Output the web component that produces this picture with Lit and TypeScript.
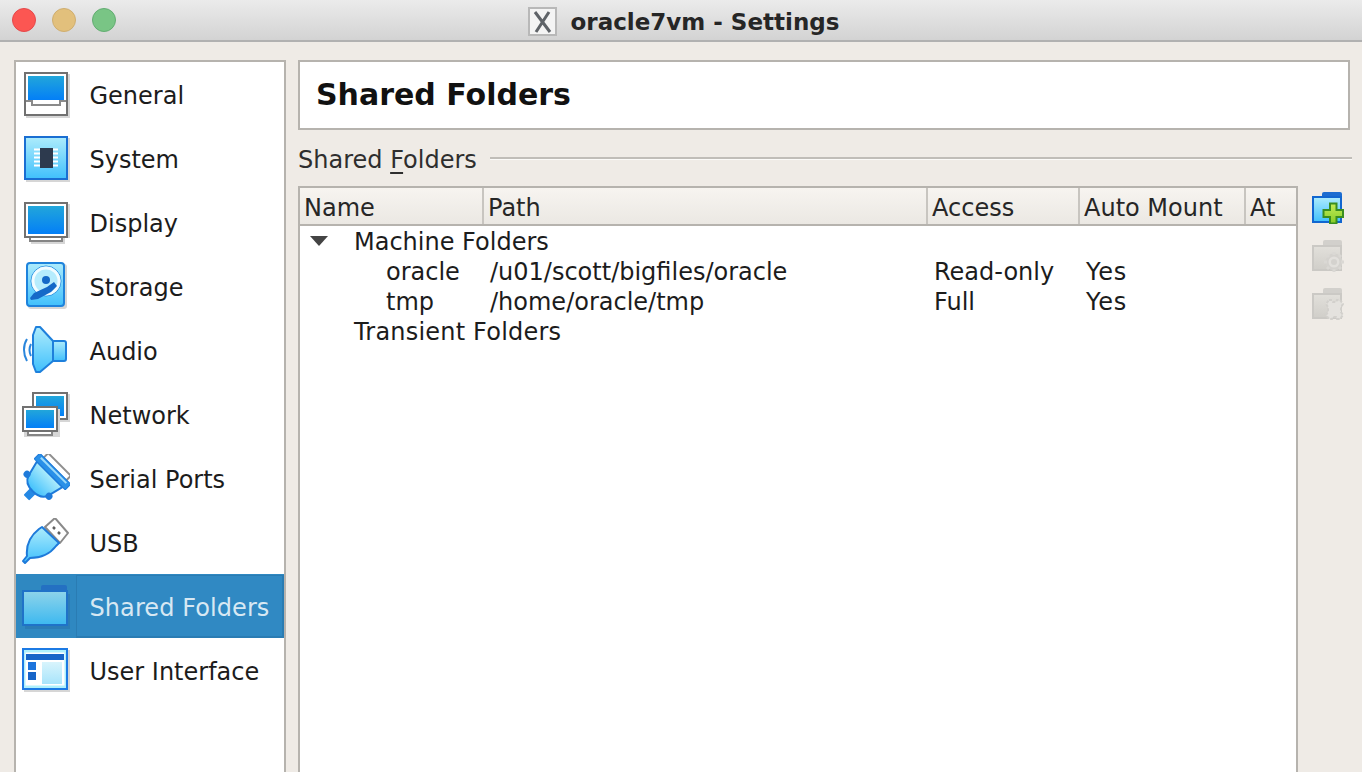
import { LitElement, html, css, svg } from "lit";
import { customElement } from "lit/decorators.js";

const defs = svg`
  <defs>
    <linearGradient id="scr" x1="0" y1="0" x2="0" y2="1"><stop offset="0" stop-color="#22a6da"/><stop offset="1" stop-color="#037ff7"/></linearGradient>
    <linearGradient id="lite" x1="0" y1="0" x2="0" y2="1"><stop offset="0" stop-color="#aeecfc"/><stop offset="1" stop-color="#40c0fc"/></linearGradient>
    <linearGradient id="fold" x1="0" y1="0" x2="0" y2="1"><stop offset="0" stop-color="#8ed4ea"/><stop offset="1" stop-color="#3cb8f0"/></linearGradient>
    <linearGradient id="pane" x1="0" y1="0" x2="0" y2="1"><stop offset="0" stop-color="#d8f4fc"/><stop offset="1" stop-color="#a8e4fb"/></linearGradient>
    <linearGradient id="dis" x1="0" y1="0" x2="0" y2="1"><stop offset="0" stop-color="#e2e0db"/><stop offset="1" stop-color="#d0cec9"/></linearGradient>
    <linearGradient id="green" x1="0" y1="0" x2="0" y2="1"><stop offset="0" stop-color="#c4ec58"/><stop offset="1" stop-color="#86cc28"/></linearGradient>
  </defs>`;

const SH = "#d6d6d6";
const icons: Record<string, unknown> = {
  general: svg`
    <rect x="4" y="4" width="44" height="44" fill="${SH}"/>
    <rect x="3" y="3" width="42" height="42" fill="#fff" stroke="#717171" stroke-width="2"/>
    <rect x="6" y="6" width="36" height="24" fill="url(#scr)"/>
    <path d="M4 31h6v4h28v-4h6" fill="none" stroke="#8a8a8a" stroke-width="2"/>`,
  system: svg`
    <rect x="4" y="4" width="44" height="44" fill="${SH}"/>
    <rect x="3" y="3" width="42" height="42" fill="url(#lite)" stroke="#1a6ed2" stroke-width="2"/>
    <path d="M12 15.500h24M12 19.500h24M12 23.500h24M12 27.500h24M12 31.500h24" stroke="#fff" stroke-width="2"/>
    <rect x="18" y="14" width="13" height="20" fill="#2d3a4e"/>`,
  display: svg`
    <rect x="5" y="6" width="44" height="34" fill="${SH}"/>
    <rect x="9" y="40" width="34" height="6" fill="${SH}"/>
    <path d="M8 39v4h32v-4" fill="#fff" stroke="#858585" stroke-width="2"/>
    <rect x="3" y="5" width="42" height="34" fill="#fff" stroke="#717171" stroke-width="2"/>
    <rect x="6" y="8" width="36" height="28" fill="url(#scr)"/>`,
  storage: svg`
    <rect x="6" y="2" width="39" height="45" rx="3" fill="${SH}"/>
    <rect x="5" y="1" width="37" height="43" rx="3" fill="url(#lite)" stroke="#1e83dc" stroke-width="2"/>
    <circle cx="24" cy="19" r="15" fill="#b6ecfd" stroke="#2a8ee0" stroke-width="1"/>
    <circle cx="24" cy="19" r="13" fill="none" stroke="#f2fcff" stroke-width="3"/>
    <circle cx="24" cy="18" r="4" fill="#1569c8"/>
    <path d="M8 36l4-5 13-6 7-5 3 4-6 6-13 7-7 1z" fill="#1569c8"/>`,
  audio: svg`
    <path d="M5 13c-4 6-4 15 0 22M9 18c-2 4-2 8 0 12" fill="none" stroke="#2a86dc" stroke-width="2"/>
    <rect x="30" y="15" width="14" height="20" rx="2" fill="url(#lite)" stroke="#1e80dc" stroke-width="2"/>
    <path d="M11 9l3-8h4l13 14v20L18 46h-4l-3-8z" fill="url(#lite)" stroke="#1e80dc" stroke-width="2" stroke-linejoin="round"/>`,
  network: svg`
    <rect x="12" y="4" width="36" height="28" fill="${SH}"/>
    <rect x="11" y="3" width="34" height="26" fill="#fff" stroke="#717171" stroke-width="2"/>
    <rect x="14" y="6" width="28" height="20" fill="url(#scr)"/>
    <rect x="2" y="19" width="36" height="28" fill="${SH}"/>
    <path d="M6 41v4h24v-4" fill="#fff" stroke="#858585" stroke-width="2"/>
    <rect x="1" y="17" width="34" height="24" fill="#fff" stroke="#717171" stroke-width="2"/>
    <rect x="4" y="20" width="28" height="18" fill="url(#scr)"/>`,
  serial: svg`
    <g transform="translate(30.500 17.500) rotate(45)">
      <rect x="-4" y="24" width="8" height="13" rx="1" fill="#2488e4"/>
      <rect x="-16" y="-10" width="32" height="7" rx="1" fill="#fff" stroke="#8f8f8f" stroke-width="2"/>
      <path d="M-18 4H18L14 20C12 26 6 28 0 28S-12 26-14 20z" fill="url(#lite)" stroke="#1e7ada" stroke-width="2" stroke-linejoin="round"/>
      <rect x="-22" y="-4" width="44" height="8" rx="1" fill="#2a90e8" stroke="#1e7ada" stroke-width="1"/>
      <path d="M-18 -1.500H18" stroke="#9fdcfa" stroke-width="2"/>
      <circle cx="-16" cy="20" r="3.500" fill="#1e7ada"/>
      <circle cx="15" cy="20" r="3.500" fill="#1e7ada"/>
    </g>`,
  usb: svg`
    <path d="M23 9l10-9 13 15-8 10z" fill="#fff" stroke="#8a8a8a" stroke-width="2" stroke-linejoin="round"/>
    <path d="M31 9l2 2M36 14l2 2" stroke="#5f5f5f" stroke-width="2.500"/>
    <path d="M20 9L37 25l-3 3C28 36 18 40 8 40l-5 5-2-2 4-5C4 28 8 18 17 11z" fill="url(#lite)" stroke="#1e7ada" stroke-width="2" stroke-linejoin="round"/>`,
  folders: svg`
    <rect x="19" y="3" width="26" height="12" rx="2" fill="#2470c2"/>
    <rect x="2" y="11" width="46" height="35" fill="#2a78b0" transform="translate(1 1)" opacity=".7"/>
    <rect x="1" y="9" width="44" height="34" fill="url(#fold)" stroke="#1f72c8" stroke-width="2"/>`,
  ui: svg`
    <rect x="2" y="4" width="46" height="42" fill="${SH}"/>
    <rect x="1" y="3" width="44" height="40" fill="#aef0fc" stroke="#1c7ae4" stroke-width="2"/>
    <rect x="3" y="6" width="40" height="34" fill="#fff" stroke="#aef0fc"/>
    <rect x="4" y="8" width="38" height="6" fill="#1765c8"/>
    <rect x="6" y="16" width="8" height="8" fill="#1c74dc"/>
    <rect x="6" y="26" width="8" height="8" fill="#1765c8"/>
    <rect x="20" y="16" width="20" height="22" fill="url(#pane)"/>`,
};

const items: [string, string][] = [
  ["general", "General"], ["system", "System"], ["display", "Display"], ["storage", "Storage"],
  ["audio", "Audio"], ["network", "Network"], ["serial", "Serial Ports"], ["usb", "USB"],
  ["folders", "Shared Folders"], ["ui", "User Interface"],
];

const tools = [
  svg`
    <rect x="10" y="0" width="20" height="9" rx="2" fill="#1c6cd0"/>
    <rect x="1" y="5" width="28" height="25" fill="url(#lite)" stroke="#1166d0" stroke-width="2"/>
    <path d="M18 11.500h6.500v6.500H31v7h-6.500v6.500H18V25h-6.500v-7H18z" fill="url(#green)" stroke="#3a8e20" stroke-width="2"/>`,
  svg`
    <rect x="11" y="0" width="19" height="8" rx="2" fill="#d2d0cc"/>
    <rect x="1" y="6" width="28" height="24" fill="url(#dis)" stroke="#cbc9c5" stroke-width="2"/>
    <circle cx="22" cy="22" r="7" fill="#e2e0dc" stroke="#d4d2ce" stroke-width="3"/>
    <path d="M22 12v3M22 29v3M12 22h3M29 22h3M15 15l2 2M27 27l2 2M15 29l2-2M27 17l2-2" stroke="#dad8d4" stroke-width="3"/>
    <circle cx="22" cy="22" r="3" fill="#d4d2ce"/>`,
  svg`
    <rect x="11" y="0" width="19" height="8" rx="2" fill="#d2d0cc"/>
    <rect x="1" y="6" width="28" height="24" fill="url(#dis)" stroke="#cbc9c5" stroke-width="2"/>
    <path d="M17 12h3l1 2h3l1-2h3l3 4-2 3v5l2 3-3 4h-3l-1-2h-3l-1 2h-3l-3-4 2-3v-5l-2-3z" fill="#e4e2de" stroke="#d2d0cc" stroke-width="2" stroke-dasharray="3 1.500"/>`,
];

@customElement("app-root")
export class AppRoot extends LitElement {
  static styles = css`
    :host { display: block; width: 1362px; height: 772px; overflow: hidden; background: #efebe6; font-family: "DejaVu Sans", sans-serif; font-size: 24px; color: #1c1c1c; }
    .titlebar { height: 40px; display: flex; align-items: center; position: relative; justify-content: center; background: linear-gradient(#ebebeb, #d3d3d3); border-bottom: 2px solid #b1b1b1; }
    .lights { position: absolute; left: 12px; top: 8px; display: flex; gap: 16px; }
    .light { width: 24px; height: 24px; box-sizing: border-box; border-radius: 50%; border: 1.500px solid; }
    .red { background: #fc5652; border-color: #e5484a; }
    .yellow { background: #e2c07c; border-color: #cfae70; }
    .green { background: #79c585; border-color: #63ad72; }
    .title { display: flex; align-items: center; gap: 14px; font-weight: bold; font-size: 23px; color: #262626; margin-left: 5px; padding-top: 3px; }
    .title svg { width: 29px; height: 29px; display: block; }
    .content { display: flex; gap: 12px; padding: 18px 10px 0 14px; align-items: flex-start; }
    .side { width: 268px; height: 760px; flex: none; background: #fff; border: 2px solid #b6b3ae; }
    .item { height: 64px; display: flex; align-items: center; box-sizing: border-box; padding-left: 6px; gap: 19.500px; position: relative; }
    .item svg { width: 48px; height: 48px; display: block; flex: none; position: relative; }
    .item span { position: relative; padding-top: 4px; }
    .item.sel { background: #2f88c1; color: #d7e8f3; }
    .item.sel span { letter-spacing: .08px; }
    .item.sel::before { content: ""; position: absolute; left: 60px; right: 0; top: 1px; bottom: 0; border: 1px solid #2a7cb3; border-right-width: 2px; border-bottom-width: 2px; background: #3089c3; }
    .main { flex: 1; min-width: 0; }
    .head { height: 64px; margin-right: 2px; background: #fff; border: 2px solid #b6b3ae; display: flex; align-items: center; padding-left: 16px; padding-bottom: 2px; font-size: 30px; font-weight: bold; color: #111; }
    .group { height: 56px; display: flex; align-items: center; gap: 13px; color: #2e2e2e; }
    .group span { padding-top: 3px; }
    .group u { text-decoration-thickness: 2px; text-underline-offset: 4px; }
    .group i { flex: 1; height: 2px; background: #c0bdb8; border-bottom: 1px solid #fbfaf8; }
    .rowwrap { display: flex; align-items: flex-start; }
    .table { width: 996px; height: 620px; flex: none; background: #fff; border: 2px solid #b6b3ae; }
    .thead, .tr { display: grid; grid-template-columns: 184px 444px 152px 166px 50px; }
    .thead { height: 36px; border-bottom: 2px solid #b6b3ae; background: linear-gradient(#f7f4f0, #ebe8e3); margin-bottom: 1px; }
    .th { display: flex; align-items: center; padding: 4px 0 0 4px; border-right: 2px solid #c8c5c0; color: #262626; line-height: 1; }
    .th:last-child { border-right: none; }
    .tr { height: 30px; line-height: 30px; }
    .td { padding-left: 6px; white-space: nowrap; }
    .wide { letter-spacing: .2px; }
    .yes { letter-spacing: .7px; }
    .group-row { display: flex; height: 30px; line-height: 30px; position: relative; padding-left: 54px; }
    .td.name { padding-left: 86px; }
    .tri { position: absolute; left: 10px; top: 9px; width: 0; height: 0; border-left: 9px solid transparent; border-right: 9px solid transparent; border-top: 10px solid #444; }
    .tools { flex: 1; display: flex; flex-direction: column; gap: 16px; padding: 6px 0 0 14px; }
    .tools svg { width: 32px; height: 32px; display: block; }
    .defs { position: absolute; width: 0; height: 0; }
  `;

  render() {
    return html`
      <svg class="defs">${defs}</svg>
      <div class="titlebar">
        <div class="lights"><div class="light red"></div><div class="light yellow"></div><div class="light green"></div></div>
        <div class="title">
          <svg viewBox="0 0 29 29"><rect x="1" y="1" width="27" height="27" fill="#f4f4f4" stroke="#b8b8b8" stroke-width="2"/><path d="M7 5l15 20M21 5L8 25" stroke="#5f6368" stroke-width="3"/></svg>
          <span>oracle7vm - Settings</span>
        </div>
      </div>
      <div class="content">
        <div class="side">
          ${items.map(([k, label], i) => html`
            <div class="item ${i === 8 ? "sel" : ""}">
              <svg viewBox="0 0 48 48">${icons[k]}</svg>
              <span>${label}</span>
            </div>`)}
        </div>
        <div class="main">
          <div class="head">Shared Folders</div>
          <div class="group"><span>Shared <u>F</u>olders</span><i></i></div>
          <div class="rowwrap">
            <div class="table">
              <div class="thead">
                <div class="th">Name</div><div class="th">Path</div><div class="th">Access</div><div class="th">Auto Mount</div><div class="th">At</div>
              </div>
              <div class="group-row"><div class="tri"></div>Machine Folders</div>
              <div class="tr"><div class="td name">oracle</div><div class="td">/u01/scott/bigfiles/oracle</div><div class="td">Read-only</div><div class="td yes">Yes</div><div class="td"></div></div>
              <div class="tr"><div class="td name">tmp</div><div class="td">/home/oracle/tmp</div><div class="td">Full</div><div class="td yes">Yes</div><div class="td"></div></div>
              <div class="group-row wide">Transient Folders</div>
            </div>
            <div class="tools">
              ${tools.map((t) => html`<svg viewBox="0 0 32 32">${t}</svg>`)}
            </div>
          </div>
        </div>
      </div>
    `;
  }
}
